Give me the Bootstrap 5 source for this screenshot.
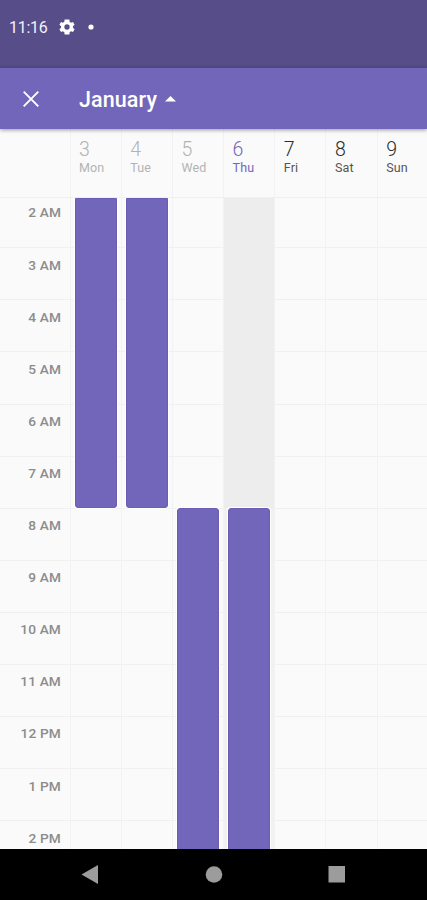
<!DOCTYPE html>
<html lang="en">
<head>
<meta charset="utf-8">
<meta name="viewport" content="width=device-width, initial-scale=1">
<title>Calendar week</title>
<link href="https://cdn.jsdelivr.net/npm/bootstrap@5.3.0/dist/css/bootstrap.min.css" rel="stylesheet">
<style>
  body { font-family: Roboto, sans-serif; background: #fafafa; height: 900px; }
  .status { height: 68px; background: #564d89; font-size: 16px; line-height: 20px; padding: 18px 0 0 9px; color: #f3f0fb; }
  .clock { width: 50px; letter-spacing: -.25px; }
  .dot { margin-left: 13px; }
  .appbar { height: 61px; background: #7266ba; padding-left: 22px; box-shadow: 0 1px 4px rgba(0,0,0,.4); z-index: 2; }
  .month { font-size: 21.5px; font-weight: 500; line-height: 26px; margin: 2px 0 0 39px; letter-spacing: .1px; }
  .gutter { width: 69.5px; flex: none; }
  .days { height: 69px; border-bottom: 1px solid #f0f0f0; }
  .day { width: 51.2px; flex: none; border-left: 1px solid #f2f2f2; }
  .days .day { padding: 10px 0 0 8.5px; color: #b3b3b3; }
  .num { font-size: 19.5px; line-height: 21px; font-weight: 300; }
  .name { font-size: 12.5px; line-height: 16px; letter-spacing: .15px; }
  .days .today { color: #7266ba; }
  .days .next { color: #2c2c2c; }
  .next .name { color: #555; }
  .week { height: 651px; }
  .hour { height: 52.1px; flex: none; border-bottom: 1px solid #f0f0f0; font-size: 13.7px; font-weight: 500; line-height: 16px; color: #8c8c8c; padding-top: 8.3px; letter-spacing: .15px; }
  .hour:first-child { height: 50.3px; padding-top: 6.3px; }
  .hour span { width: 61px; }
  .plan { z-index: 1; }
  .plan .today { background: linear-gradient(#ededed 310px, #f1f1ef 310px); }
  .shift { background: #7266ba; border: 1px solid #6a5db3; margin: 0 4px 0 4px; box-shadow: 0 0 0 1px #fff; }
  .early { height: 310px; border-radius: 0 0 3px 3px; }
  .late { height: 343px; margin-top: 310px; border-radius: 3px 3px 0 0; }
  .sysbar { height: 51px; background: #000; z-index: 3; }
</style>
<script src="https://cdn.jsdelivr.net/npm/bootstrap@5.3.0/dist/js/bootstrap.bundle.min.js"></script>
</head>
<body class="d-flex flex-column overflow-hidden">
  <header class="status d-flex flex-shrink-0">
    <span class="clock">11:16</span>
    <svg width="16" height="18" viewBox="2 2 20 20" fill="#fff" aria-label="Settings"><path fill-rule="evenodd" d="M19.4 13a7.8 7.8 0 0 0 0-2l2.100-1.700-2-3.500-2.500 1a7.300 7.300 0 0 0-1.700-1L15 2.500H9l-.4 3.300a7.300 7.300 0 0 0-1.700 1l-2.400-1-2 3.500L4.600 11a7.800 7.800 0 0 0 0 2l-2.100 1.700 2 3.500 2.400-1c.5.4 1.100.7 1.700 1l.4 3.300h6l.4-3.300c.6-.3 1.200-.6 1.700-1l2.400 1 2-3.500zM12 15.300a3.300 3.300 0 1 1 0-6.600 3.300 3.300 0 0 1 0 6.600z"/></svg>
    <svg class="dot" width="6" height="18" viewBox="0 0 6 18" aria-hidden="true"><circle cx="3" cy="9" r="2.600" fill="#fff"/></svg>
  </header>
  <nav class="appbar d-flex align-items-center flex-shrink-0 position-relative text-white">
    <svg width="18" height="18" viewBox="0 0 18 18" stroke="#fff" stroke-width="1.900" aria-label="Close"><path d="M1.700 1.700l14.600 14.600M16.300 1.700L1.700 16.300"/></svg>
    <span class="month">January</span>
    <svg class="ms-2" width="11" height="6" viewBox="0 0 11 6" fill="#fff" aria-hidden="true"><path d="M0 5.500L5.500 0 11 5.500z"/></svg>
  </nav>
  <section class="days d-flex flex-shrink-0">
    <div class="gutter"></div>
    <div class="day"><div class="num">3</div><div class="name">Mon</div></div>
    <div class="day"><div class="num">4</div><div class="name">Tue</div></div>
    <div class="day"><div class="num">5</div><div class="name">Wed</div></div>
    <div class="day today"><div class="num">6</div><div class="name">Thu</div></div>
    <div class="day next"><div class="num">7</div><div class="name">Fri</div></div>
    <div class="day next"><div class="num">8</div><div class="name">Sat</div></div>
    <div class="day next"><div class="num">9</div><div class="name">Sun</div></div>
  </section>
  <main class="week position-relative overflow-hidden flex-shrink-0">
    <div class="d-flex flex-column">
      <div class="hour"><span class="d-block text-end">2 AM</span></div>
      <div class="hour"><span class="d-block text-end">3 AM</span></div>
      <div class="hour"><span class="d-block text-end">4 AM</span></div>
      <div class="hour"><span class="d-block text-end">5 AM</span></div>
      <div class="hour"><span class="d-block text-end">6 AM</span></div>
      <div class="hour"><span class="d-block text-end">7 AM</span></div>
      <div class="hour"><span class="d-block text-end">8 AM</span></div>
      <div class="hour"><span class="d-block text-end">9 AM</span></div>
      <div class="hour"><span class="d-block text-end">10 AM</span></div>
      <div class="hour"><span class="d-block text-end">11 AM</span></div>
      <div class="hour"><span class="d-block text-end">12 PM</span></div>
      <div class="hour"><span class="d-block text-end">1 PM</span></div>
      <div class="hour"><span class="d-block text-end">2 PM</span></div>
    </div>
    <!-- Shifts lie over the hour lines -->
    <div class="plan d-flex position-absolute top-0 start-0 h-100">
      <div class="gutter"></div>
      <div class="day"><div class="shift early"></div></div>
      <div class="day"><div class="shift early"></div></div>
      <div class="day"><div class="shift late"></div></div>
      <div class="day today"><div class="shift late"></div></div>
      <div class="day"></div>
      <div class="day"></div>
      <div class="day"></div>
    </div>
  </main>
  <footer class="sysbar d-flex align-items-center flex-shrink-0">
    <svg width="427" height="51" viewBox="0 0 427 51" fill="#9c9c9c" aria-label="Back, home, recent apps"><path d="M81.500 25.500L98 16v19z"/><circle cx="214" cy="25.500" r="8.300"/><rect x="328.500" y="17" width="16.500" height="16.500"/></svg>
  </footer>
</body>
</html>
